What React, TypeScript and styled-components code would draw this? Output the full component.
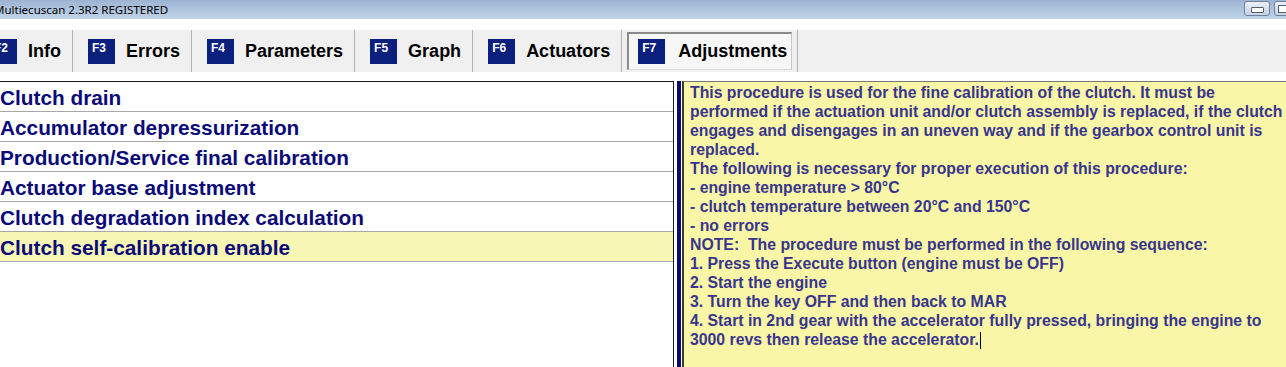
import React from "react";
import styled, { createGlobalStyle } from "styled-components";

const Global = createGlobalStyle`
  html, body { margin: 0; padding: 0; background: #ffffff; overflow: hidden; }
  #root { width: 1286px; height: 367px; overflow: hidden; }
`;

const Window = styled.div`
  width: 1286px;
  height: 367px;
  display: flex;
  flex-direction: column;
  background: #ffffff;
  overflow: hidden;
  font-family: "Liberation Sans", Arial, sans-serif;
`;

const TitleBar = styled.div`
  height: 19px;
  flex: none;
  display: flex;
  align-items: center;
  justify-content: space-between;
  background: linear-gradient(#9cb4d2, #c2d4ea);
`;

const TitleText = styled.span`
  margin-left: -6px;
  font-family: "Noto Sans", "Open Sans", sans-serif;
  font-size: 11.5px;
  color: #000;
  line-height: 19px;
  white-space: nowrap;
`;

const WinButtons = styled.div`
  display: flex;
  gap: 4px;
  margin-right: -14px;
  align-self: flex-start;
  margin-top: 1px;
`;

const WinButton = styled.div`
  width: 26px;
  height: 15px;
  box-sizing: border-box;
  border: 1px solid #6f8098;
  border-radius: 3px;
  background: linear-gradient(#e9eff7, #c6d3e4);
  display: flex;
  align-items: center;
  justify-content: center;
`;

const MinGlyph = styled.div`
  width: 11px;
  height: 4px;
  border: 1px solid #555d6a;
  border-radius: 1px;
  background: #ffffff;
  margin-top: 3px;
`;

const RestoreGlyph = styled.div`
  width: 8px;
  height: 6px;
  border: 1px solid #555d6a;
  background: #ffffff;
  margin-right: 8px;
`;

const MenuStrip = styled.div`
  height: 11px;
  flex: none;
  background: #ffffff;
`;

const Toolbar = styled.div`
  height: 42px;
  flex: none;
  display: flex;
  align-items: center;
  background: #f0f0f0;
  margin-left: -25px;
`;

const Tab = styled.div`
  display: flex;
  align-items: center;
  gap: 11px;
  height: 100%;
  padding: 0 11px 0 15px;
`;

const ActiveTab = styled.div`
  display: flex;
  align-items: center;
  gap: 13px;
  height: 38px;
  box-sizing: border-box;
  margin: 0 5px 0 5px;
  padding: 0 4px 0 9px;
  border-top: 2px solid #8a8a8a;
  border-left: 2px solid #8a8a8a;
  border-right: 1px solid #c8c8c8;
  border-bottom: 1px solid #d8d8d8;
  background: #f7f7f7;
`;

const Separator = styled.div`
  width: 1px;
  height: 100%;
  background: #b4b4b4;
  flex: none;
`;

const Badge = styled.div`
  width: 27px;
  height: 25px;
  background: #0b1f7c;
  color: #ffffff;
  font-family: "Liberation Sans", Arial, sans-serif;
  font-weight: bold;
  font-size: 12px;
  line-height: 12px;
  padding: 3px 0 0 4px;
  box-sizing: border-box;
  flex: none;
`;

const TabLabel = styled.span`
  font-family: "Liberation Sans", Arial, sans-serif;
  font-weight: bold;
  font-size: 18px;
  color: #000000;
  white-space: nowrap;
`;

const Gap = styled.div`
  height: 9px;
  flex: none;
  background: #ffffff;
`;

const Main = styled.div`
  flex: 1;
  display: flex;
  min-height: 0;
`;

const LeftPanel = styled.div`
  width: 674px;
  flex: none;
  box-sizing: border-box;
  border-top: 1px solid #1a1a1a;
  border-right: 1px solid #1a1a1a;
  background: #ffffff;
  display: flex;
  flex-direction: column;
`;

const ListItem = styled.div<{ $selected?: boolean }>`
  height: 30px;
  box-sizing: border-box;
  border-bottom: 1px solid #a8a8a8;
  line-height: 29px;
  padding: 1px 0 0 0;
  font-family: "Liberation Sans", Arial, sans-serif;
  font-weight: bold;
  font-size: 20.8px;
  color: #0a0a78;
  white-space: nowrap;
  background: ${(p) => (p.$selected ? "#f8f6b4" : "#ffffff")};
`;

const Splitter = styled.div`
  width: 4px;
  flex: none;
  margin: 0 1px 0 3px;
  background: #0a0a6e;
`;

const RightPanel = styled.div`
  flex: 1;
  box-sizing: border-box;
  border-top: 1px solid #777777;
  border-left: 2px solid #3a3a3a;
  background: #f9f6a8;
  padding: 1px 0 0 6px;
  overflow: hidden;
`;

const Description = styled.div`
  font-family: "Liberation Sans", Arial, sans-serif;
  font-weight: bold;
  font-size: 15.8px;
  line-height: 19px;
  color: #38358c;
  white-space: pre;
`;

const Caret = styled.span`
  display: inline-block;
  width: 1px;
  height: 17px;
  background: #000000;
  vertical-align: -4px;
  margin-left: 1px;
`;

const tabs = [
  { key: "F2", label: "Info" },
  { key: "F3", label: "Errors" },
  { key: "F4", label: "Parameters" },
  { key: "F5", label: "Graph" },
  { key: "F6", label: "Actuators" },
];

const items = [
  "Clutch drain",
  "Accumulator depressurization",
  "Production/Service final calibration",
  "Actuator base adjustment",
  "Clutch degradation index calculation",
  "Clutch self-calibration enable",
];

const lines = [
  "This procedure is used for the fine calibration of the clutch. It must be",
  "performed if the actuation unit and/or clutch assembly is replaced, if the clutch",
  "engages and disengages in an uneven way and if the gearbox control unit is",
  "replaced.",
  "The following is necessary for proper execution of this procedure:",
  "- engine temperature > 80°C",
  "- clutch temperature between 20°C and 150°C",
  "- no errors",
  "NOTE:  The procedure must be performed in the following sequence:",
  "1. Press the Execute button (engine must be OFF)",
  "2. Start the engine",
  "3. Turn the key OFF and then back to MAR",
  "4. Start in 2nd gear with the accelerator fully pressed, bringing the engine to",
];

export default function App() {
  return (
    <Window>
      <Global />
      <TitleBar>
        <TitleText>Multiecuscan 2.3R2 REGISTERED</TitleText>
        <WinButtons>
          <WinButton>
            <MinGlyph />
          </WinButton>
          <WinButton>
            <RestoreGlyph />
          </WinButton>
        </WinButtons>
      </TitleBar>
      <MenuStrip />
      <Toolbar>
        {tabs.map((t) => (
          <React.Fragment key={t.key}>
            <Tab>
              <Badge>{t.key}</Badge>
              <TabLabel>{t.label}</TabLabel>
            </Tab>
            <Separator />
          </React.Fragment>
        ))}
        <ActiveTab>
          <Badge>F7</Badge>
          <TabLabel>Adjustments</TabLabel>
        </ActiveTab>
        <Separator />
      </Toolbar>
      <Gap />
      <Main>
        <LeftPanel>
          {items.map((it, i) => (
            <ListItem key={it} $selected={i === items.length - 1}>
              {it}
            </ListItem>
          ))}
        </LeftPanel>
        <Splitter />
        <RightPanel>
          <Description>
            {lines.join("\n")}
            {"\n3000 revs then release the accelerator."}
            <Caret />
          </Description>
        </RightPanel>
      </Main>
    </Window>
  );
}
